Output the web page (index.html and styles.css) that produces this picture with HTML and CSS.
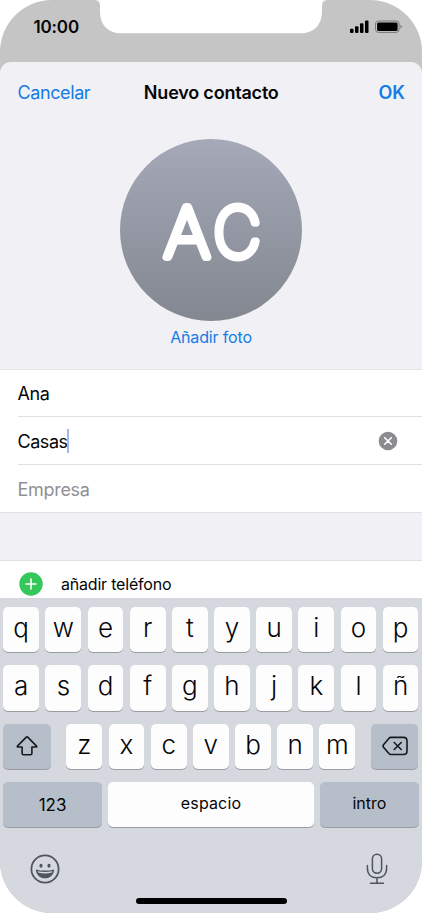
FILE: index.html
```html
<!DOCTYPE html>
<html lang="es">
<head>
<meta charset="utf-8">
<title>Nuevo contacto</title>
<link rel="stylesheet" href="styles.css">
</head>
<body>
<main class="phone">
  <header class="status">
    <span class="time">10:00</span>
    <svg class="notch" width="232" height="34" viewBox="0 0 232 34"><path d="M0 0Q5 0 5 6V11C5 25 13 33.3 27 33.3H205C219 33.3 227 25 227 11V6Q227 0 232 0Z" fill="#fff"/></svg>
    <svg class="signals" width="54" height="14" viewBox="0 0 54 14">
      <rect x="1" y="8.7" width="3.5" height="4.3" rx="1"/><rect x="6" y="6.3" width="3.5" height="6.7" rx="1"/><rect x="11" y="3.2" width="3.5" height="9.8" rx="1"/><rect x="16" y="0.5" width="3.5" height="12.5" rx="1"/>
      <rect x="26.5" y="1" width="23.6" height="11.4" rx="3" fill="none" stroke="#777"/><rect x="28.1" y="2.5" width="20.5" height="8.4" rx="1.5"/><path d="M51.3 4.8Q53 5.3 53 6.7T51.3 8.6Z" fill="#888"/>
    </svg>
  </header>
  <section class="sheet">
    <nav class="bar"><span class="cancel">Cancelar</span><h1>Nuevo contacto</h1><span class="ok">OK</span></nav>
    <svg class="avatar" width="182" height="182" viewBox="0 0 182 182">
      <defs><linearGradient id="g" x2="0" y2="1"><stop stop-color="#a5a9b8"/><stop offset="1" stop-color="#838790"/></linearGradient></defs>
      <circle cx="91" cy="91" r="91" fill="url(#g)"/>
      <text class="initials" y="118.2"><tspan x="44.2" textLength="45.5" lengthAdjust="spacingAndGlyphs">A</tspan><tspan x="93.4" textLength="47" lengthAdjust="spacingAndGlyphs">C</tspan></text>
    </svg>
    <div class="photo"><span>Añadir foto</span></div>
    <div class="fields">
      <div class="field first"><span class="ana">Ana</span></div>
      <div class="field"><span class="casas">Casas</span><i class="caret"></i>
        <svg class="clear" width="20" height="20" viewBox="0 0 20 20"><circle cx="10" cy="10" r="9.3" fill="#8b8b90"/><path d="M6.7 6.7l6.6 6.6M13.3 6.7l-6.6 6.6" stroke="#fff" stroke-width="1.6" stroke-linecap="round"/></svg>
      </div>
      <div class="field"><span class="empresa">Empresa</span></div>
    </div>
    <div class="add">
      <svg width="24" height="24" viewBox="0 0 24 24"><circle cx="12" cy="12" r="11.7" fill="#34c759"/><path d="M7 12h10M12 7v10" stroke="#fff" stroke-width="1.6" stroke-linecap="round"/></svg>
      <span>añadir teléfono</span>
    </div>
  </section>
  <section class="keyboard">
    <div class="row"><b>q</b><b>w</b><b>e</b><b>r</b><b>t</b><b>y</b><b>u</b><b>i</b><b>o</b><b>p</b></div>
    <div class="row second"><b>a</b><b>s</b><b>d</b><b>f</b><b>g</b><b>h</b><b>j</b><b>k</b><b>l</b><b>ñ</b></div>
    <div class="row third">
      <b class="dark side"><svg width="24" height="22" viewBox="0 0 24 22"><path d="M11.3 2.1Q12 1.4 12.7 2.1L21.6 11.1Q22.2 12 21.2 12H16.9V18.3Q16.9 19.7 15.5 19.7H8.5Q7.1 19.7 7.1 18.3V12H2.8Q1.8 12 2.4 11.1Z"/></svg></b>
      <b>z</b><b>x</b><b>c</b><b>v</b><b>b</b><b>n</b><b>m</b>
      <b class="dark side"><svg width="26" height="20" viewBox="0 0 26 20"><path d="M9 1.4H21.5Q25 1.4 25 4.9V15Q25 18.5 21.5 18.5H9Q7.8 18.5 6.9 17.5L1.5 11.2Q.5 10 1.5 8.7L6.9 2.4Q7.8 1.4 9 1.4ZM12.2 6.5l7 7M19.2 6.5l-7 7"/></svg></b>
    </div>
    <div class="row words"><b class="dark num">123</b><b class="space">espacio</b><b class="dark intro">intro</b></div>
    <div class="tools">
      <svg width="30" height="30" viewBox="0 0 30 30" fill="none" stroke="#50555c" stroke-width="1.8"><circle cx="15" cy="15" r="13.6"/><ellipse cx="11" cy="11.8" rx="1.6" ry="2" fill="#50555c" stroke="none"/><ellipse cx="19" cy="11.8" rx="1.6" ry="2" fill="#50555c" stroke="none"/><path d="M5.8 15.4Q15 17.8 24.2 15.4C23.8 20.9 20 24.3 15 24.3S6.2 20.9 5.8 15.4Z" fill="#50555c" stroke="none"/><path d="M7.6 17.3Q15 18.8 22.4 17.3L21.9 18.5Q15 20.4 8.1 18.5Z" fill="#d5d8df" stroke="none"/></svg>
      <svg width="22" height="32" viewBox="0 0 22 32" fill="none" stroke="#50555c" stroke-width="1.5" stroke-linecap="round"><rect x="6.4" y="1.2" width="9.2" height="19" rx="4.6"/><path d="M1.4 12.5V15.3C1.4 21.5 5.4 24.8 11 24.8S20.6 21.5 20.6 15.3V12.5M11 24.8V30.2M4.5 30.2H17.5"/></svg>
    </div>
    <div class="home"></div>
  </section>
</main>
</body>
</html>
```
FILE: styles.css
```css
* { box-sizing: border-box; }
body { margin: 0; background: #fff; font-family: Inter, sans-serif; color: #050507; }
svg { display: block; flex: none; }
.phone { width: 422px; height: 913px; overflow: hidden; border-radius: 52px; background: #c5c5c5; display: flex; flex-direction: column; }
.status { height: 62px; display: flex; align-items: flex-start; flex: none; }
.time { width: 95px; padding: 17px 0 0 33.5px; font-size: 17px; line-height: 20px; font-weight: 600; letter-spacing: -.15px; }
.signals { margin: 20px 0 0 22px; }
.sheet { height: 536px; flex: none; overflow: hidden; background: #f0f0f5; border-radius: 11px 11px 0 0; }
.bar { height: 77.4px; padding: 18.6px 17px 0 17.5px; display: flex; justify-content: space-between; line-height: 24px; font-size: 18px; color: #147ce5; }
.bar h1 { margin: 0; font-size: 18px; font-weight: 600; color: #050507; letter-spacing: -.2px; }
.cancel { width: 88px; letter-spacing: -.4px; }
.ok { width: 88px; text-align: right; font-weight: 600; }
.avatar { margin: 0 auto; }
.initials { font-size: 68.5px; font-weight: 100; fill: #fff; stroke: #fff; stroke-width: 7.8px; stroke-linejoin: round; }
.photo { height: 47.6px; padding-top: 5px; text-align: center; color: #147ce5; font-size: 16px; line-height: 22px; letter-spacing: -.15px; }
.fields { background: #fff; border-top: 1px solid #e4e4e7; border-bottom: 1px solid #e1e1e5; }
.field { height: 48px; margin-left: 17.5px; padding-top: 1px; border-top: 1px solid #e1e1e4; display: flex; align-items: center; font-size: 18px; letter-spacing: -.45px; }
.field.first { height: 46px; border: 0; padding-top: 2px; }
.casas, .empresa { padding-top: 1px; }
.caret { width: 2px; height: 24px; margin-left: -1px; background: #a3b8ea; }
.clear { margin: 0 24px 0 auto; }
.empresa { color: #919194; letter-spacing: -.3px; }
.add { height: 50px; margin-top: 47px; border-top: 1px solid #e1e1e4; background: #fff; padding: 11px 0 0 18.5px; display: flex; align-items: flex-start; gap: 18.5px; font-size: 16px; line-height: 24px; letter-spacing: -.2px; }
.keyboard { flex: 1; background: #d5d8df; padding: 9px 3.3px 0; display: flex; flex-direction: column; }
.row { display: flex; height: 45.3px; margin-bottom: 13.1px; gap: 6.4px; flex: none; }
.row b { flex: 0 0 35.78px; border-radius: 5px; background: #fdfdfe; box-shadow: 0 1px 0 #999ca2; display: flex; align-items: center; justify-content: center; font-weight: 300; font-size: 26px; line-height: 30px; padding-bottom: 3px; }
.row.second b { padding-bottom: 5px; }
.row .dark { background: #b6bec9; }
.row b.side { flex-basis: 47.7px; padding: 0; }
.side svg { fill: none; stroke: #17191c; stroke-width: 1.6; stroke-linejoin: round; stroke-linecap: round; }
.row .side:first-child { margin-right: 9.1px; }
.row .side:last-child { margin-left: 9.2px; }
.row.words b { font-size: 16px; font-weight: 400; flex-basis: 98.6px; }
.row.words .space { flex: 1; letter-spacing: .15px; }
.row.words .num { padding: 0; font-size: 17px; }
.tools { display: flex; justify-content: space-between; align-items: center; padding: 0 31px 0 26.3px; margin-top: 12px; height: 32px; }
.home { width: 151px; height: 6px; border-radius: 3px; background: #000; margin: 13px auto 0; }
```
